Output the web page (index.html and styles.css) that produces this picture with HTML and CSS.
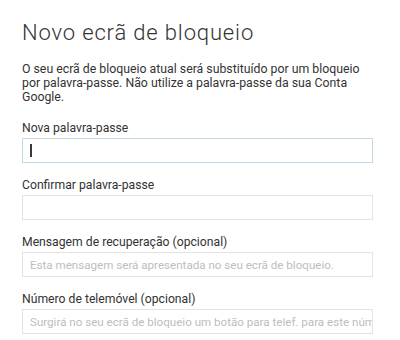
FILE: index.html
```html
<!DOCTYPE html>
<html lang="pt">
<head>
<meta charset="utf-8">
<title>Novo ecrã de bloqueio</title>
<link rel="stylesheet" href="styles.css">
</head>
<body>
<main class="page">
  <h1 class="title">Novo ecrã de bloqueio</h1>
  <p class="intro">O seu ecrã de bloqueio atual será substituído por um bloqueio por palavra-passe. Não utilize a palavra-passe da sua Conta Google.</p>
  <div class="field">
    <label class="label">Nova palavra-passe</label>
    <div class="input focused"><span class="caret"></span></div>
  </div>
  <div class="field">
    <label class="label" for="c">Confirmar palavra-passe</label>
    <input class="input" id="c" type="password">
  </div>
  <div class="field">
    <label class="label" for="m">Mensagem de recuperação (opcional)</label>
    <input class="input" id="m" type="text" placeholder="Esta mensagem será apresentada no seu ecrã de bloqueio.">
  </div>
  <div class="field">
    <label class="label" for="t">Número de telemóvel (opcional)</label>
    <input class="input" id="t" type="text" placeholder="Surgirá no seu ecrã de bloqueio um botão para telef. para este número.">
  </div>
</main>
</body>
</html>
```
FILE: styles.css
```css
html, body {
  margin: 0;
  padding: 0;
  background: #ffffff;
}
.page {
  font-family: Roboto, "Liberation Sans", sans-serif;
  color: #333333;
  padding: 20px 0 0 22px;
  width: 351px;
}
.title {
  margin: 0;
  font-size: 22px;
  font-weight: 300;
  line-height: 25px;
  letter-spacing: 0.85px;
  color: #333333;
}
.intro {
  margin: 17px 0 17px;
  font-size: 12.3px;
  line-height: 14px;
}
.field {
  display: flex;
  flex-direction: column;
  margin-bottom: 15px;
}
.label {
  font-size: 12.2px;
  line-height: 14px;
  margin-bottom: 3px;
}
.input {
  box-sizing: border-box;
  width: 351px;
  height: 25px;
  margin: 0;
  border: 1px solid #e3e3e3;
  border-radius: 0;
  padding: 0 0 0 7px;
  font-family: Roboto, "Liberation Sans", sans-serif;
  font-size: 11.6px;
  color: #333333;
  background: #ffffff;
  outline: none;
  display: flex;
  align-items: center;
}
.input::placeholder {
  color: #bdbdbd;
  opacity: 1;
}
.focused {
  border-color: #c3dae6;
}
.caret {
  display: block;
  width: 1.5px;
  height: 13px;
  background: #3a3a3a;
}
```
